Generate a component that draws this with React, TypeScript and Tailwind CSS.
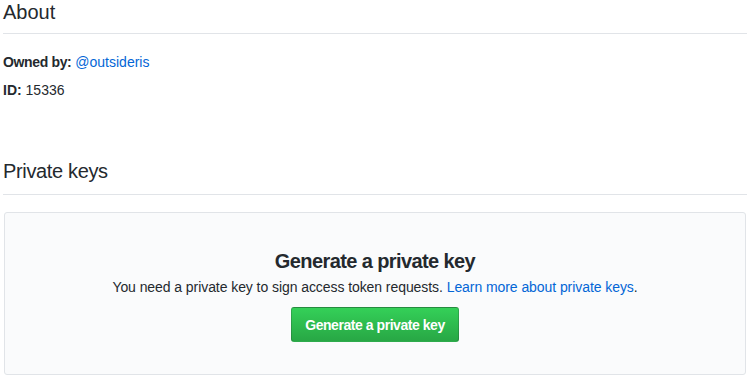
export default function App() {
  return (
    <div className="min-h-screen bg-white px-[3px] text-[14px] text-[#24292e] font-['Liberation_Sans',Helvetica,Arial,sans-serif]">
      {/* About */}
      <h2 className="text-[20px] leading-[25px] font-normal pb-[8px] border-b border-[#e1e4e8]">About</h2>
      <p className="mt-[18px] leading-[21px]">
        <strong className="font-bold tracking-[-0.35px]">Owned by:</strong>{' '}
        <a href="#" className="text-[#0366d6]">@outsideris</a>
      </p>
      <p className="mt-[7px] leading-[21px]">
        <strong className="font-bold">ID:</strong> 15336
      </p>

      {/* Private keys */}
      <h2 className="mt-[58px] text-[20px] leading-[25px] font-normal tracking-[-0.35px] pb-[10px] border-b border-[#e1e4e8]">Private keys</h2>
      <div className="mt-[17px] mx-[1px] border border-[#e1e4e8] bg-[#fafbfc] rounded-[3px] pt-[36px] pb-[32px] flex flex-col items-center text-center">
        <h3 className="text-[20px] leading-[25px] font-bold tracking-[-0.6px]">Generate a private key</h3>
        <p className="mt-[3px] leading-[21px] tracking-[-0.07px]">
          You need a private key to sign access token requests.{' '}
          <a href="#" className="text-[#0366d6]">Learn more about private keys</a>.
        </p>
        <button className="mt-[9px] h-[35px] px-[13px] rounded-[3px] border border-[rgba(27,31,35,0.2)] bg-gradient-to-b from-[#34d058] to-[#28a745] text-white font-bold text-[14px] leading-[20px] tracking-[-0.45px]">
          Generate a private key
        </button>
      </div>
    </div>
  );
}
